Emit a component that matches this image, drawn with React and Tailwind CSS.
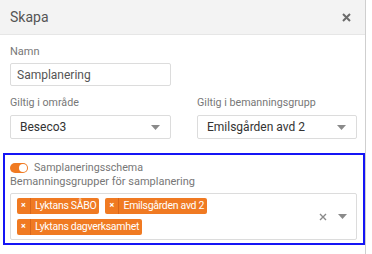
const FONT = { fontFamily: 'Roboto, "Noto Sans", Arial, sans-serif' };

const Caret = () => (
  <svg width="9" height="5" viewBox="0 0 9 5" className="shrink-0">
    <path d="M0 0h9L4.5 5z" fill="#8a8a8a" />
  </svg>
);

const Tag = ({ label }) => (
  <div className="flex h-[16px] items-stretch rounded-[2px] bg-[#f07a22] text-white">
    <span className="flex w-[14px] items-center justify-center border-r border-[#d9661a] text-[9px] font-bold">×</span>
    <span className="flex items-center pl-[4px] pr-[3px] text-[10.5px] leading-none tracking-[-0.3px]">{label}</span>
  </div>
);

const Select = ({ value }) => (
  <div className="flex h-[24px] items-center justify-between rounded-[2px] border border-[#dcdcdc] pl-[9px] pr-[10px] text-[12px] text-[#333]">
    <span>{value}</span>
    <Caret />
  </div>
);

export default function App() {
  return (
    <div className="h-[254px] w-[372px] overflow-hidden bg-white" style={FONT}>
      <div className="h-full w-[366px] border-r border-[#cfcfcf]">
        {/* Header */}
        <div className="flex h-[35px] items-center justify-between border-b border-[#e6e6e6] bg-[#f3f3f3] pl-[10px] pr-[14px]">
          <span className="text-[14px] text-[#555]">Skapa</span>
          <svg width="9" height="9" viewBox="0 0 9 9">
            <path d="M1 1l7 7M8 1L1 8" stroke="#6b6b6b" strokeWidth="2" />
          </svg>
        </div>

        <div className="pl-[10px] pr-[8px]">
          <div className="pt-[10px] text-[11px] leading-[14px] text-[#777]">Namn</div>
          <div className="mt-[4px] flex h-[23px] w-[161px] items-center rounded-[2px] border border-[#dcdcdc] px-[6px] text-[12px] text-[#555]">
            Samplanering
          </div>

          <div className="mt-[10px] grid grid-cols-[161px_160px] gap-x-[26px]">
            <div>
              <div className="text-[10.7px] leading-[14px] text-[#777]">Giltig i område</div>
              <div className="mt-[5px]"><Select value="Beseco3" /></div>
            </div>
            <div>
              <div className="text-[10.7px] leading-[14px] text-[#777]">Giltig i bemanningsgrupp</div>
              <div className="mt-[5px]"><Select value="Emilsgården avd 2" /></div>
            </div>
          </div>

          {/* Highlighted section */}
          <div className="-ml-[7px] -mr-[8px] mt-[14px] border-2 border-[#1515f5] pb-[3px] pl-[5px] pr-[6px] pt-[6px]">
            <div className="flex h-[14px] items-center gap-[6px]">
              <div className="flex h-[10px] w-[18px] items-center justify-end rounded-full bg-[#f07a22] pr-[1px]">
                <div className="h-[8px] w-[8px] rounded-full bg-white" />
              </div>
              <span className="text-[10.7px] text-[#777]">Samplaneringsschema</span>
            </div>
            <div className="text-[11px] leading-[14px] text-[#777]">Bemanningsgrupper för samplanering</div>
            <div className="mt-[4px] flex h-[47px] items-center rounded-[2px] border border-[#dcdcdc] pl-[6px] pr-[9px]">
              <div className="flex flex-1 flex-wrap content-start gap-x-[6px] gap-y-[5px] self-start pt-[4px]">
                <Tag label="Lyktans SÅBO" />
                <Tag label="Emilsgården avd 2" />
                <Tag label="Lyktans dagverksamhet" />
              </div>
              <div className="flex items-center gap-[11px]">
                <svg width="8" height="8" viewBox="0 0 8 8">
                  <path d="M1 1l6 6M7 1L1 7" stroke="#8a8a8a" strokeWidth="1.4" />
                </svg>
                <Caret />
              </div>
            </div>
          </div>
        </div>
      </div>
    </div>
  );
}
